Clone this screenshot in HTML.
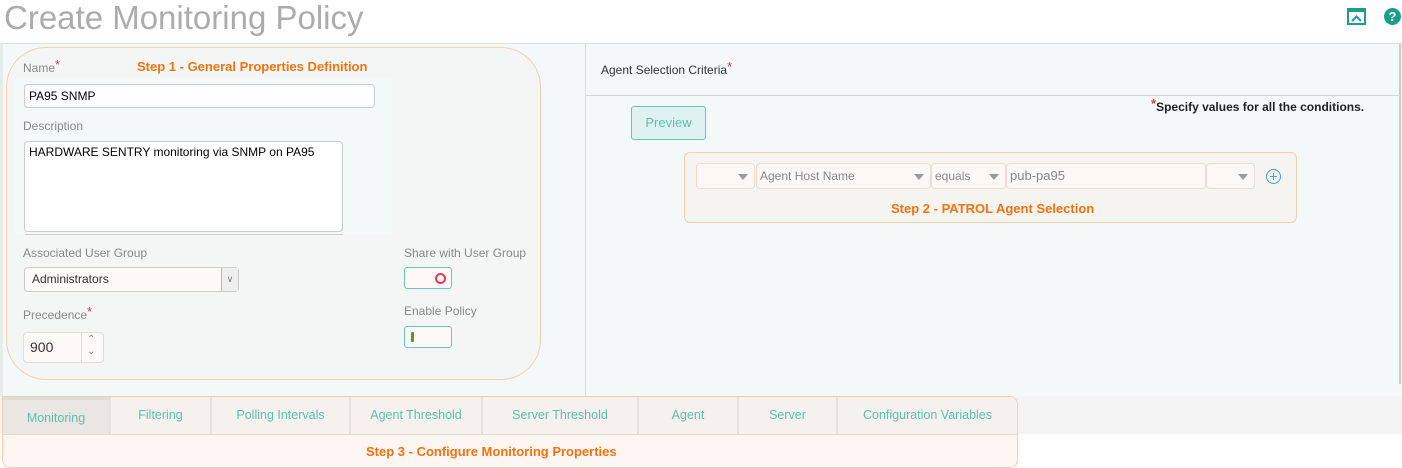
<!DOCTYPE html>
<html><head><style>
*{box-sizing:border-box;margin:0;padding:0}
body{width:1402px;height:468px;background:#fff;font-family:"Liberation Sans",sans-serif;position:relative;overflow:hidden}
.a{position:absolute}
.lbl{color:#888;font-size:12px}
.req{color:#e33;font-size:13px;vertical-align:top;position:relative;top:-4px}
.inp{background:#fff;border:1px solid #ccc;border-radius:4px}
.or{color:#f5720e;font-weight:bold;font-size:13px}
.tab{position:absolute;top:397px;height:37px;border-right:2px solid #e4e2df;background:#f4f1ee;color:#5bbfb0;font-size:12.5px;text-align:center;line-height:37px}
.sel{position:absolute;top:163px;height:26px;background:#fcf8f5;border:1px solid #ecdcd0;border-radius:4px;font-size:13px;color:#888;line-height:24px;padding-left:3px}
.sel:after{content:"";position:absolute;right:6px;top:10px;border:5px solid transparent;border-top:6px solid #999}
</style></head><body>
<div class="a" style="left:4px;top:-1px;font-size:33px;color:#acacac">Create Monitoring Policy</div>
<svg class="a" style="left:1347px;top:8px" width="19" height="17"><rect x="1" y="1" width="17" height="15" fill="#fff" stroke="#1a9e8e" stroke-width="2"/><rect x="1" y="1" width="17" height="3" fill="#1a9e8e"/><path d="M5 13 L9.5 8.5 L14 13" fill="none" stroke="#1a9e8e" stroke-width="2"/></svg>
<div class="a" style="left:1384px;top:8px;width:17px;height:17px;border-radius:50%;background:#1a9e8e;color:#fff;font-weight:bold;font-size:13px;text-align:center;line-height:17px">?</div>
<div class="a" style="left:0;top:43px;width:1402px;height:353px;background:#f2f9f8;border-top:1px solid #d8e4e2;border-left:3px solid #e5ecea"></div>
<div class="a" style="left:585px;top:44px;width:1px;height:352px;background:#d8e0de"></div>
<div class="a" style="left:1399px;top:44px;width:2px;height:340px;background:#ccc"></div>
<div class="a" style="left:586px;top:95px;width:814px;height:1px;background:#d0d8d6"></div>
<div class="a" style="left:6px;top:47px;width:535px;height:333px;border:1px solid #f5cfb0;border-radius:40px;background:#f3f6f5"></div>
<div class="a" style="left:15px;top:79px;width:377px;height:156px;background:#f2f9f8"></div>
<div class="a lbl" style="left:23px;top:61px">Name<span class="req">*</span></div>
<div class="a or" style="left:137px;top:59px">Step 1 - General Properties Definition</div>
<div class="a inp" style="left:24px;top:84px;width:351px;height:24px;font-size:12px;line-height:22px;padding-left:4px">PA95 SNMP</div>
<div class="a lbl" style="left:23px;top:119px">Description</div>
<div class="a inp" style="left:24px;top:141px;width:319px;height:91px;font-size:12px;padding:3px 4px">HARDWARE SENTRY monitoring via SNMP on PA95</div>
<div class="a" style="left:25px;top:234px;width:318px;height:1px;background:#ccc"></div>
<div class="a lbl" style="left:23px;top:246px">Associated User Group</div>
<div class="a" style="left:24px;top:267px;width:215px;height:25px;background:#fcf9f6;border:1px solid #ccc;border-radius:4px;font-size:12px;line-height:23px;padding-left:7px;color:#333">Administrators<div class="a" style="right:0;top:0;width:17px;height:23px;border-left:1px solid #bbb;background:#eee;color:#777;text-align:center;font-size:9px">&#8744;</div></div>
<div class="a lbl" style="left:23px;top:308px">Precedence<span class="req">*</span></div>
<div class="a" style="left:23px;top:332px;width:81px;height:31px;background:#fcf9f6;border:1px solid #ddd;border-radius:4px;font-size:14px;line-height:29px;padding-left:6px;color:#333">900<div class="a" style="left:57px;top:0;width:1px;height:29px;background:#ddd"></div><div class="a" style="left:63px;top:-8px;color:#888;font-size:10px">&#8963;</div><div class="a" style="left:63px;top:4px;color:#888;font-size:10px">&#8964;</div></div>
<div class="a lbl" style="left:404px;top:246px">Share with User Group</div>
<div class="a" style="left:404px;top:267px;width:48px;height:22px;border:1px solid #6cc5b8;border-radius:3px;background:#fcf9f6"><div class="a" style="left:30px;top:5px;width:11px;height:11px;border:2.5px solid #f03a55;border-radius:50%"></div></div>
<div class="a lbl" style="left:404px;top:304px">Enable Policy</div>
<div class="a" style="left:404px;top:326px;width:48px;height:22px;border:1px solid #6cc5b8;border-radius:3px;background:#fcf9f6"><div class="a" style="left:6px;top:5px;width:3px;height:10px;background:#5a9a2a;border-radius:1px"></div></div>
<div class="a" style="left:601px;top:63px;font-size:12px;color:#333">Agent Selection Criteria<span class="req">*</span></div>
<div class="a" style="left:1151px;top:100px;font-size:12px;color:#222;font-weight:bold"><span class="req">*</span>Specify values for all the conditions.</div>
<div class="a" style="left:631px;top:106px;width:75px;height:34px;border:1px solid #6cc5b8;border-radius:3px;background:#e0f2ef;color:#5bbfb0;font-size:13px;text-align:center;line-height:32px">Preview</div>
<div class="a" style="left:684px;top:152px;width:613px;height:71px;border:1px solid #f5cfb0;border-radius:6px;background:#f5f4f0"></div>
<div class="sel" style="left:696px;width:59px"></div>
<div class="sel" style="left:756px;width:175px;font-size:12px">Agent Host Name</div>
<div class="sel" style="left:931px;width:75px;font-size:12px">equals</div>
<div class="a" style="left:1006px;top:163px;width:200px;height:26px;background:#fcf8f5;border:1px solid #ecdcd0;border-radius:4px;font-size:13px;color:#888;line-height:24px;padding-left:3px">pub-pa95</div>
<div class="sel" style="left:1206px;width:49px"></div>
<div class="a" style="left:1266px;top:169px;width:15px;height:15px;border:1.5px solid #3aa0e8;border-radius:50%;color:#3aa0e8;font-size:14px;line-height:12px;text-align:center">+</div>
<div class="a or" style="left:891px;top:201px">Step 2 - PATROL Agent Selection</div>
<div class="a" style="left:0;top:396px;width:1402px;height:38px;background:#f4f4f4"></div>
<div class="a" style="left:2px;top:396px;width:1016px;height:72px;border:1px solid #f5cfb0;border-radius:0 8px 8px 8px;background:#fdf6f2"></div>
<div class="tab" style="left:3px;width:108px;background:#e9e6e3;border-top:3px solid #ddd">Monitoring</div>
<div class="tab" style="left:111px;width:101px">Filtering</div>
<div class="tab" style="left:212px;width:139px">Polling Intervals</div>
<div class="tab" style="left:351px;width:132px">Agent Threshold</div>
<div class="tab" style="left:483px;width:156px">Server Threshold</div>
<div class="tab" style="left:639px;width:100px">Agent</div>
<div class="tab" style="left:739px;width:99px">Server</div>
<div class="tab" style="left:838px;width:179px;border-right:none;border-top-right-radius:8px">Configuration Variables</div>
<div class="a" style="left:3px;top:434px;width:1014px;height:1px;background:#ecd8ca"></div>
<div class="a or" style="left:366px;top:444px">Step 3 - Configure Monitoring Properties</div>
</body></html>
